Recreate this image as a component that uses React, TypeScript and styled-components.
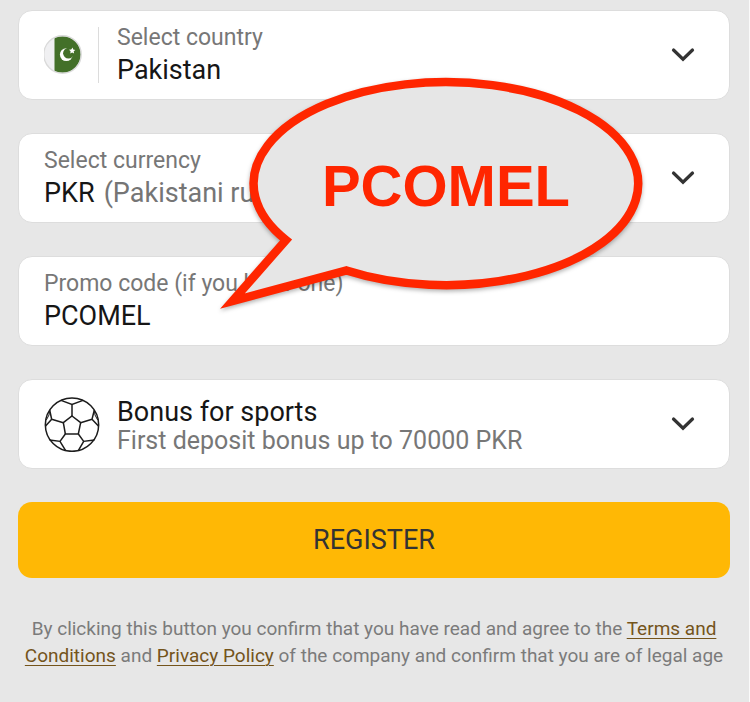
import React from "react";
import styled, { createGlobalStyle } from "styled-components";

const GlobalStyle = createGlobalStyle`
  * { box-sizing: border-box; }
  body {
    margin: 0;
    background: #e7e7e7;
    font-family: Roboto, "Liberation Sans", sans-serif;
  }
`;

const Page = styled.main`
  position: relative;
  min-height: 100vh;
  padding: 10px 19px 32px 18px;
  border-right: 1px solid #fafafa;
`;

const Form = styled.form`
  display: flex;
  flex-direction: column;
  gap: 33px;
`;

const Card = styled.label`
  display: flex;
  align-items: center;
  min-height: 90px;
  padding: 0 34px 0 25px;
  background: #ffffff;
  border: 1px solid #dddddd;
  border-radius: 14px;
`;

const Leading = styled.span<{ $divided?: boolean }>`
  display: flex;
  flex: none;
  align-items: center;
  width: ${(p) => (p.$divided ? "55px" : "73px")};
  height: 56px;
  margin-right: ${(p) => (p.$divided ? "18px" : "0")};
  border-right: ${(p) => (p.$divided ? "1px solid #dcdcdc" : "none")};
`;

const Body = styled.span`
  display: flex;
  flex: 1;
  flex-direction: column;
  min-width: 0;
  padding-bottom: 3px;
`;

const Caption = styled.span<{ $size?: number }>`
  height: 32px;
  font-size: ${(p) => p.$size ?? 23}px;
  line-height: 32px;
  color: #777777;
  white-space: nowrap;
`;

const ValueLine = styled.span`
  display: flex;
  gap: 9px;
  height: 32px;
  font-size: 27px;
  line-height: 32px;
  color: #757575;
  white-space: nowrap;
`;

const Select = styled.select`
  appearance: none;
  field-sizing: content;
  margin: 0;
  padding: 0;
  border: 0;
  outline: 0;
  background: transparent;
  color: #161616;
  font: inherit;
  line-height: 32px;
`;

const TextInput = styled.input`
  width: 100%;
  margin: 0;
  padding: 0;
  border: 0;
  outline: 0;
  background: transparent;
  color: #161616;
  font: inherit;
  line-height: 32px;
`;

const BonusBody = styled(Body)`
  padding: 3px 0 0;
  & > * { height: 30px; line-height: 30px; }
`;

const RegisterButton = styled.button`
  min-height: 76px;
  border: 0;
  border-radius: 14px;
  background: #ffb805;
  color: #333333;
  font-family: inherit;
  font-size: 27px;
  cursor: pointer;
`;

const Legal = styled.p`
  margin: 37px 0 0;
  font-size: 19px;
  line-height: 27px;
  text-align: center;
  color: #7b7b7b;
`;

const LegalLink = styled.a`
  color: #74541b;
  text-decoration: underline;
  text-decoration-thickness: 1px;
  text-underline-offset: 3px;
`;

const Callout = styled.div`
  position: absolute;
  top: 74px;
  left: 216px;
  width: 432px;
  height: 242px;
  pointer-events: none;
`;

const CalloutShape = styled.svg`
  display: block;
  overflow: visible;
  filter: drop-shadow(0 2px 2px rgba(0, 0, 0, 0.3));
`;

const CalloutText = styled.strong`
  position: absolute;
  inset: 0 0 20px 28px;
  display: flex;
  align-items: center;
  justify-content: center;
  font-family: "Liberation Sans", Arial, sans-serif;
  font-size: 58px;
  font-weight: 700;
  color: #ff2600;
`;

const Chevron = () => (
  <svg width="24" height="16" viewBox="0 0 24 16" fill="none" aria-hidden="true">
    <path d="M2.5 3 12 12.2 21.5 3" stroke="#333" strokeWidth="3.2" strokeLinecap="round" />
  </svg>
);

const Flag = () => (
  <svg width="40" height="40" viewBox="0 0 40 40" aria-hidden="true">
    <clipPath id="flag-disc">
      <circle cx="18.5" cy="19.5" r="18.3" />
    </clipPath>
    <g clipPath="url(#flag-disc)">
      <rect width="40" height="40" fill="#f0f0f2" />
      <rect x="10.5" width="30" height="40" fill="#437029" />
    </g>
    <circle cx="18.5" cy="19.5" r="18.7" fill="none" stroke="#dadada" strokeWidth="1.4" />
    <circle cx="22.3" cy="19.6" r="6.4" fill="#fff" />
    <circle cx="24.5" cy="18.2" r="5.4" fill="#437029" />
    <path d="m28.6 12.6.6 2 2.1.3-1.6 1.4.4 2.1-1.9-1-1.9 1 .3-2.2-1.6-1.4 2.2-.3z" fill="#fff" />
  </svg>
);

const Ball = () => (
  <svg width="56" height="56" viewBox="43 33 168 168" fill="none" stroke="#1c1c1c" strokeWidth="4.5" aria-hidden="true">
    <circle cx="127" cy="119" r="80" />
    <path d="M127 93 153 113 146 147H107L101 113Z" />
    <path d="M127 93V58M94 46 127 58 160 46M153 113 187 103M194 75 187 103 207 124M101 113 66 103M60 75 66 103 47 124" />
    <path d="M194 75Q193 90 204 105M60 75Q61 90 50 105" strokeWidth="3" />
    <path d="M146 147 162 169M194 165 162 169 146 197M107 147 91 169M60 165 91 169 108 197" />
  </svg>
);

export default function App() {
  return (
    <>
      <GlobalStyle />
      <Page>
        <Form onSubmit={(e) => e.preventDefault()}>
          <Card>
            <Leading $divided>
              <Flag />
            </Leading>
            <Body>
              <Caption>Select country</Caption>
              <ValueLine>
                <Select name="country" defaultValue="pk">
                  <option value="pk">Pakistan</option>
                </Select>
              </ValueLine>
            </Body>
            <Chevron />
          </Card>
          <Card>
            <Body>
              <Caption>Select currency</Caption>
              <ValueLine>
                <Select name="currency" defaultValue="pkr">
                  <option value="pkr">PKR</option>
                </Select>
                <span>(Pakistani rupee)</span>
              </ValueLine>
            </Body>
            <Chevron />
          </Card>
          <Card>
            <Body>
              <Caption>Promo code (if you have one)</Caption>
              <ValueLine>
                <TextInput name="promo" defaultValue="PCOMEL" />
              </ValueLine>
            </Body>
          </Card>
          <Card>
            <Leading>
              <Ball />
            </Leading>
            <BonusBody>
              <ValueLine>
                <Select name="bonus" defaultValue="sports">
                  <option value="sports">Bonus for sports</option>
                </Select>
              </ValueLine>
              <Caption $size={25}>First deposit bonus up to 70000 PKR</Caption>
            </BonusBody>
            <Chevron />
          </Card>
          <RegisterButton type="submit">REGISTER</RegisterButton>
        </Form>
        <Legal>
          By clicking this button you confirm that you have read and agree to the{" "}
          <LegalLink href="#terms">Terms and Conditions</LegalLink> and{" "}
          <LegalLink href="#privacy">Privacy Policy</LegalLink> of the company and confirm that you
          are of legal age
        </Legal>
        <Callout>
          <CalloutShape width="432" height="242" viewBox="216 74 432 242" aria-hidden="true">
            <path
              d="M286 240A192.3 101.5 0 1 1 346.5 270.5L232.5 301Z"
              fill="#e6e6e6"
              stroke="#ff2600"
              strokeWidth="8.5"
            />
          </CalloutShape>
          <CalloutText>PCOMEL</CalloutText>
        </Callout>
      </Page>
    </>
  );
}
